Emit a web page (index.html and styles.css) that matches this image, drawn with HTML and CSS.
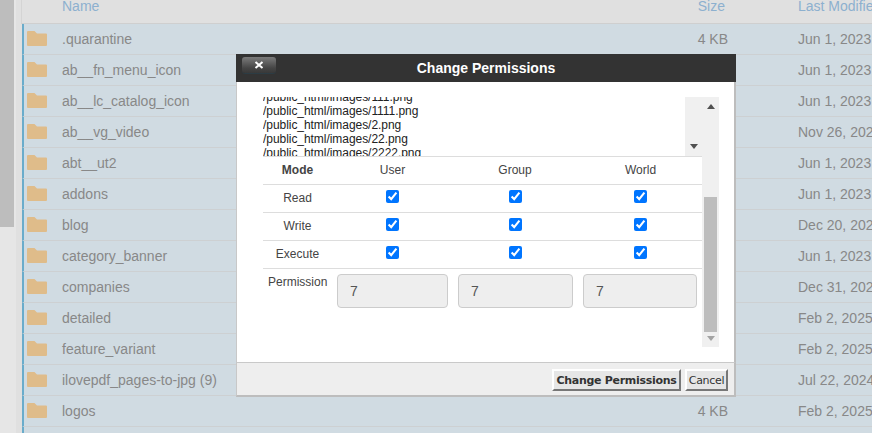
FILE: index.html
```html
<!DOCTYPE html>
<html lang="en">
<head>
<meta charset="utf-8">
<title>Change Permissions</title>
<link rel="stylesheet" href="styles.css">
<svg class="sprite" width="0" height="0" aria-hidden="true"><symbol id="folder" viewBox="0 0 20 15"><path d="M1 0H7.500L10 2.500H19A1 1 0 0 1 20 3.500V14A1 1 0 0 1 19 15H1A1 1 0 0 1 0 14V1A1 1 0 0 1 1 0Z"/></symbol></svg>
</head>
<body>
<div class="page">
  <div class="rail"><div class="rail-thumb"></div></div>
  <div class="files">
    <div class="head"><span class="name">Name</span><span class="size">Size</span><span class="date">Last Modified</span></div>
    <div class="row"><svg class="folder"><use href="#folder"/></svg><span class="name">.quarantine</span><span class="size">4 KB</span><span class="date">Jun 1, 2023</span></div>
    <div class="row"><svg class="folder"><use href="#folder"/></svg><span class="name">ab__fn_menu_icon</span><span class="size"></span><span class="date">Jun 1, 2023</span></div>
    <div class="row"><svg class="folder"><use href="#folder"/></svg><span class="name">ab__lc_catalog_icon</span><span class="size"></span><span class="date">Jun 1, 2023</span></div>
    <div class="row"><svg class="folder"><use href="#folder"/></svg><span class="name">ab__vg_video</span><span class="size"></span><span class="date">Nov 26, 2024</span></div>
    <div class="row"><svg class="folder"><use href="#folder"/></svg><span class="name">abt__ut2</span><span class="size"></span><span class="date">Jun 1, 2023</span></div>
    <div class="row"><svg class="folder"><use href="#folder"/></svg><span class="name">addons</span><span class="size"></span><span class="date">Jun 1, 2023</span></div>
    <div class="row"><svg class="folder"><use href="#folder"/></svg><span class="name">blog</span><span class="size"></span><span class="date">Dec 20, 2024</span></div>
    <div class="row"><svg class="folder"><use href="#folder"/></svg><span class="name">category_banner</span><span class="size"></span><span class="date">Jun 1, 2023</span></div>
    <div class="row"><svg class="folder"><use href="#folder"/></svg><span class="name">companies</span><span class="size"></span><span class="date">Dec 31, 2024</span></div>
    <div class="row"><svg class="folder"><use href="#folder"/></svg><span class="name">detailed</span><span class="size"></span><span class="date">Feb 2, 2025</span></div>
    <div class="row"><svg class="folder"><use href="#folder"/></svg><span class="name">feature_variant</span><span class="size"></span><span class="date">Feb 2, 2025</span></div>
    <div class="row"><svg class="folder"><use href="#folder"/></svg><span class="name">ilovepdf_pages-to-jpg (9)</span><span class="size"></span><span class="date">Jul 22, 2024</span></div>
    <div class="row"><svg class="folder"><use href="#folder"/></svg><span class="name">logos</span><span class="size">4 KB</span><span class="date">Feb 2, 2025</span></div>
    <div class="row"></div>
  </div>
</div>

<div class="modal">
  <div class="modal-head">
    <button class="close" aria-label="Close"><svg width="10" height="8" viewBox="0 0 10 8"><path d="M1.500 1L8.500 7M8.500 1L1.500 7"/></svg></button>
    <h1>Change Permissions</h1>
  </div>
  <div class="modal-body">
    <div class="panel">
      <div class="panel-main">
        <div class="list-wrap">
          <div class="list">
            <div>/public_html/images/111.png</div>
            <div>/public_html/images/1111.png</div>
            <div>/public_html/images/2.png</div>
            <div>/public_html/images/22.png</div>
            <div>/public_html/images/2222.png</div>
          </div>
          <div class="inner-bar"><span class="arrow down dark"></span></div>
        </div>
        <div class="grid">
          <div class="cell label"><b>Mode</b></div><div class="cell">User</div><div class="cell">Group</div><div class="cell">World</div>
          <div class="cell label">Read</div><div class="cell"><input type="checkbox" checked></div><div class="cell"><input type="checkbox" checked></div><div class="cell"><input type="checkbox" checked></div>
          <div class="cell label">Write</div><div class="cell"><input type="checkbox" checked></div><div class="cell"><input type="checkbox" checked></div><div class="cell"><input type="checkbox" checked></div>
          <div class="cell label">Execute</div><div class="cell"><input type="checkbox" checked></div><div class="cell"><input type="checkbox" checked></div><div class="cell"><input type="checkbox" checked></div>
        </div>
        <div class="perm">
          <span class="perm-label">Permission</span>
          <input class="perm-a" type="text" value="7" readonly>
          <input class="perm-b" type="text" value="7" readonly>
          <input class="perm-c" type="text" value="7" readonly>
        </div>
      </div>
      <div class="outer-bar">
        <span class="arrow up dark"></span>
        <span class="thumb"></span>
        <span class="arrow down light"></span>
      </div>
    </div>
  </div>
  <div class="modal-foot">
    <button class="btn primary">Change Permissions</button>
    <button class="btn cancel">Cancel</button>
  </div>
</div>
</body>
</html>
```
FILE: styles.css
```css
html, body { margin: 0; padding: 0; height: 100%; overflow: hidden; }
body { background: #e0e0e0; font-family: "Liberation Sans", Arial, sans-serif; color: #888; font-size: 14px; }
.sprite { position: absolute; }
.page { display: flex; height: 433px; overflow: hidden; }
.rail { width: 16px; flex: none; background: #e6e6e6; }
.rail-thumb { width: 14px; height: 227px; background: #bdbdbd; }
.files { flex: none; width: 900px; margin-left: 6px; }
.head { display: flex; align-items: flex-start; height: 23px; line-height: 12px; border-bottom: 1px solid #cfcfcf; border-left: 1px solid #d4d4d4; color: #8db0cf; margin-left: -1px; }
.head .name { margin-left: 40px; width: 597px; }
.row { display: flex; align-items: center; height: 30px; background: #d0dbe2; border-left: 2px solid #6aaccb; border-bottom: 1px solid #cdd0d2; }
.folder { width: 20px; height: 15px; margin-left: 3px; margin-top: -2px; fill: #dfbc8a; flex: none; }
.row .name { width: 600px; margin-left: 15px; flex: none; }
.size { width: 66px; text-align: right; flex: none; }
.date { margin-left: 70px; white-space: nowrap; }
.head .date { margin-left: 73px; }

.modal { position: absolute; left: 236px; top: 54px; width: 500px; height: 343px; display: flex; flex-direction: column; }
.modal-head { display: flex; align-items: center; height: 28px; flex: none; background: #333; position: relative; }
.modal-head h1 { margin: 0; width: 100%; text-align: center; font-size: 14px; font-weight: bold; color: #fff; }
.close { position: absolute; left: 6px; top: 3px; width: 34px; height: 16px; padding: 0; border: 0; border-radius: 3px; background: linear-gradient(#7b7b7b, #444 70%, #383838); box-shadow: 0 1px 0 #2c3c44; display: flex; align-items: center; justify-content: center; }
.close svg { fill: none; stroke: #fff; stroke-width: 2; }
.modal-body { flex: 1; padding: 15px 16px 0 26px; min-height: 0; background: #fff; border-left: 1px solid #c8c8c8; border-right: 2px solid #bdbdbd; }
.panel { display: flex; height: 250px; }
.panel-main { width: 439px; flex: none; }
.list-wrap { display: flex; height: 59px; }
.list { flex: 1; height: 59px; overflow: hidden; font-size: 12px; line-height: 14px; color: #222; letter-spacing: -0.05px; }
.list > div:first-child { margin-top: -7px; }
.inner-bar { width: 17px; background: #f0f0f0; display: flex; flex-direction: column; justify-content: flex-end; align-items: center; padding-bottom: 7px; box-sizing: border-box; }
.arrow { display: block; width: 0; height: 0; border-left: 4px solid transparent; border-right: 4px solid transparent; }
.arrow.up.dark { border-bottom: 5px solid #505050; }
.arrow.down.dark { border-top: 5px solid #505050; }
.arrow.down.light { border-top: 5px solid #a3a3a3; }
.grid { display: grid; grid-template-columns: 69px 121px 124px 127px; grid-auto-rows: 28px; border-top: 1px solid #ddd; font-size: 12px; color: #444; }
.cell { display: flex; align-items: center; justify-content: center; box-sizing: border-box; height: 28px; padding-bottom: 2px; border-bottom: 1px solid #ddd; }
.cell input { width: 13px; height: 13px; margin: 0 0 2px; }
.label { color: #444; }
.perm { display: flex; align-items: flex-start; padding-top: 5px; }
.perm-label { width: 74px; flex: none; font-size: 12px; color: #444; padding: 1px 0 0 5px; box-sizing: border-box; }
.perm input { box-sizing: border-box; height: 34px; margin-right: 10px; padding: 0 12px; background: #eee; border: 1px solid #ccc; border-radius: 4px; font: 14px "Liberation Sans", Arial, sans-serif; color: #555; flex: none; }
.perm .perm-a { width: 111px; }
.perm .perm-b { width: 115px; }
.perm .perm-c { width: 114px; margin-right: 0; }
.outer-bar { width: 17px; flex: none; background: #f0f0f0; display: flex; flex-direction: column; align-items: center; padding-top: 7px; box-sizing: border-box; position: relative; }
.thumb { width: 13px; height: 135px; margin-top: 88px; margin-bottom: 4px; background: #bdbdbd; }
.modal-foot { display: flex; justify-content: flex-end; align-items: flex-start; gap: 4px; height: 35px; box-sizing: border-box; flex: none; padding: 6px 6px 0 0; background: #eee; border-top: 1px solid #c9c9c9; border-left: 1px solid #c8c8c8; border-right: 2px solid #bdbdbd; border-bottom: 2px solid #bdbdbd; }
.btn { height: 22px; padding: 0; font: 11px "DejaVu Sans", Verdana, sans-serif; color: #333; background: #e6e6e6; border: 2px solid; border-color: #fff #777 #777 #fff; border-radius: 0; }
.btn.primary { width: 129px; font-weight: bold; letter-spacing: -0.3px; white-space: nowrap; }
.btn.cancel { width: 43px; letter-spacing: -0.3px; }
```
